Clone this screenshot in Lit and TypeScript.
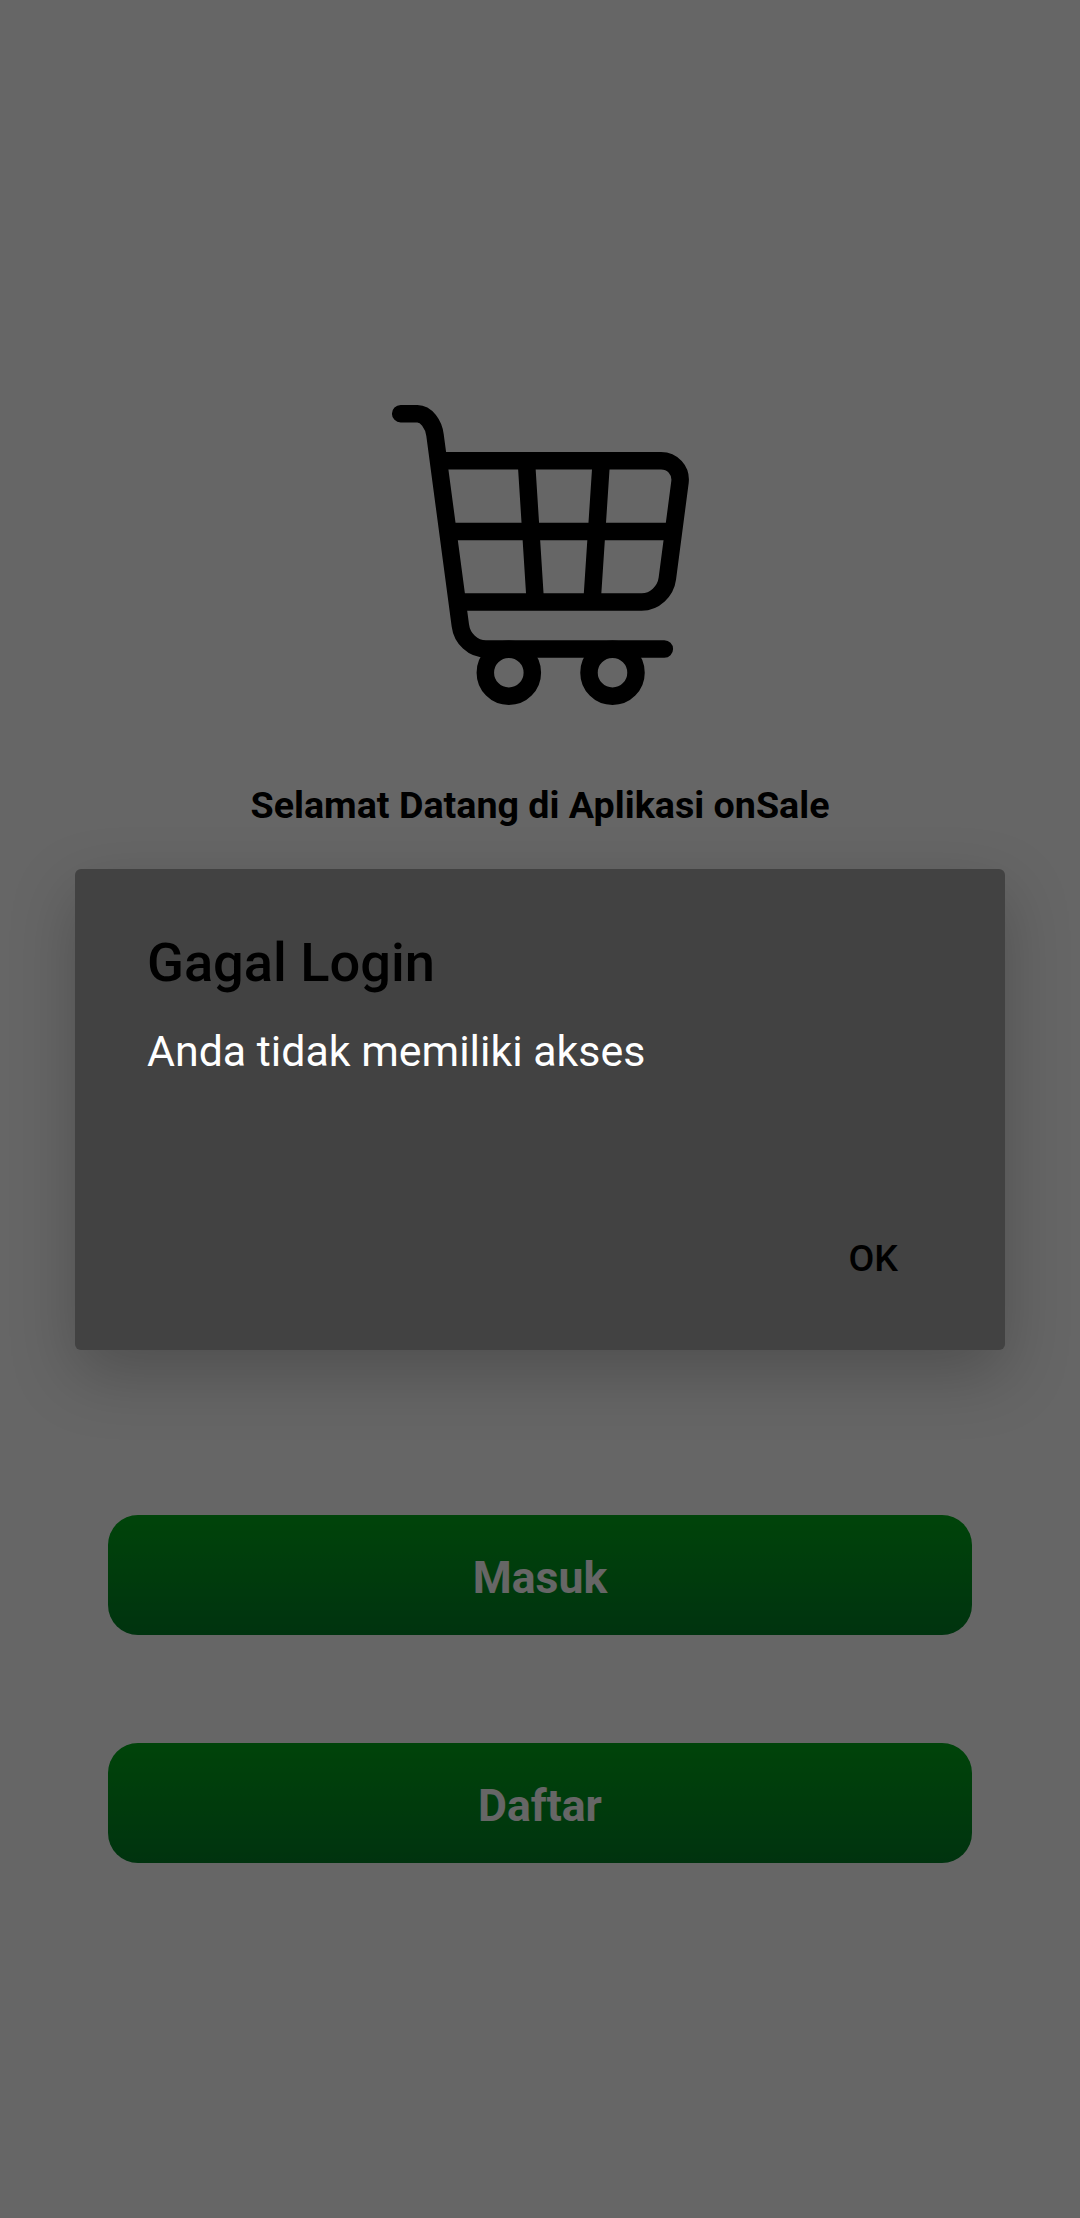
import { LitElement, html, css } from "lit";
import { customElement, property } from "lit/decorators.js";

@customElement("cart-logo")
class CartLogo extends LitElement {
  static styles = css`
    :host { display: block; width: 320px; height: 330px; }
    .cart { display: block; width: 100%; height: 100%; }
  `;

  render() {
    return html`
      <svg class="cart" viewBox="0 0 960 990" fill="none" stroke="#000" stroke-width="52.5" stroke-linecap="round">
        <path d="M62 71H112C139 71 161 103 165 135L241 706C246 746 279 777 318 777H853" />
        <path stroke-linecap="butt" d="M180 212H843C877 212 904 240 900 276L862 566C857 604 824 636 785 636H240" />
        <path stroke-linecap="butt" d="M205 424.5H880M439 212L466 636M664 212L636 636" />
        <circle cx="386.5" cy="848" r="70.5" />
        <circle cx="697.5" cy="848" r="70.5" />
      </svg>
    `;
  }
}

@customElement("gradient-button")
class GradientButton extends LitElement {
  @property() label = "";

  static styles = css`
    :host { display: block; }
    .button {
      display: block;
      box-sizing: border-box;
      width: 100%;
      height: 120px;
      padding: 6px 0 0;
      border: 0;
      border-radius: 30px;
      background: linear-gradient(#00aa19, #008026);
      color: #fff;
      font: 700 44.5px/114px Roboto, sans-serif;
      text-align: center;
    }
  `;

  render() {
    return html`<button class="button">${this.label}</button>`;
  }
}

@customElement("alert-dialog")
class AlertDialog extends LitElement {
  @property() heading = "";
  @property() message = "";

  static styles = css`
    :host {
      display: flex;
      flex-direction: column;
      box-sizing: border-box;
      width: 930px;
      height: 481px;
      padding: 62px 72px 56px;
      border-radius: 6px;
      background: #424242;
      box-shadow: 0 24px 66px rgba(0, 0, 0, 0.225);
      font-family: Roboto, sans-serif;
    }
    .heading { margin: 0; color: #000; font-size: 54.2px; font-weight: 500; line-height: 64px; }
    .message { margin: 30px 0 0; color: #fff; font-size: 42.9px; line-height: 52px; }
    .actions { display: flex; justify-content: flex-end; margin-top: auto; padding-right: 35px; }
    .action {
      padding: 0;
      border: 0;
      background: none;
      color: #000;
      font: 500 37.5px/72px Roboto, sans-serif;
    }
  `;

  render() {
    return html`
      <h2 class="heading">${this.heading}</h2>
      <p class="message">${this.message}</p>
      <div class="actions"><button class="action">OK</button></div>
    `;
  }
}

@customElement("app-root")
class AppRoot extends LitElement {
  static styles = css`
    :host {
      display: block;
      position: relative;
      width: 1080px;
      height: 2218px;
      overflow: hidden;
      background: #fff;
      font-family: Roboto, sans-serif;
    }
    .page {
      display: flex;
      flex-direction: column;
      align-items: center;
      box-sizing: border-box;
      height: 100%;
      padding: 390px 108px 0;
    }
    .welcome { margin: 63px 0 0; color: #000; font-size: 37.65px; font-weight: 700; line-height: 44px; white-space: nowrap; }
    .buttons { display: flex; flex-direction: column; gap: 108px; width: 100%; margin-top: 688px; }
    .scrim {
      position: absolute;
      inset: 0;
      display: flex;
      flex-direction: column;
      align-items: center;
      padding-top: 869px;
      background: rgba(0, 0, 0, 0.6);
    }
  `;

  render() {
    return html`
      <main class="page">
        <cart-logo></cart-logo>
        <h1 class="welcome">Selamat Datang di Aplikasi onSale</h1>
        <div class="buttons">
          <gradient-button label="Masuk"></gradient-button>
          <gradient-button label="Daftar"></gradient-button>
        </div>
      </main>
      <div class="scrim">
        <alert-dialog heading="Gagal Login" message="Anda tidak memiliki akses"></alert-dialog>
      </div>
    `;
  }
}
